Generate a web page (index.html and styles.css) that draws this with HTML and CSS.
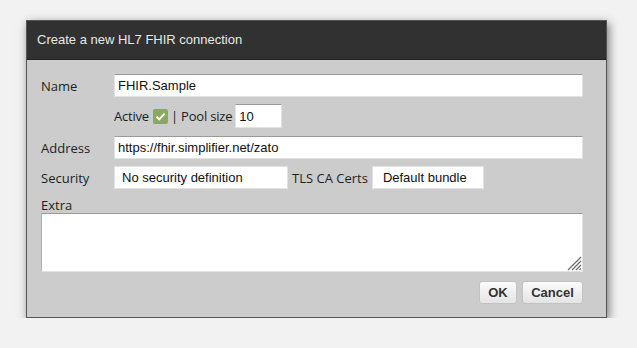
FILE: index.html
```html
<!DOCTYPE html>
<html>
<head>
  <link rel="stylesheet" href="styles.css">
</head>
<body>
  <div class="dialog">
    <div class="dialog-title">Create a new HL7 FHIR connection</div>

    <div class="dialog-body">
      <div class="row">
        <label class="label">Name</label>
        <input type="text" class="field field-wide" value="FHIR.Sample">
      </div>

      <div class="row row-sub">
        <span class="label"></span>
        <span class="inline-text">Active</span>
        <span class="check">
          <svg width="15" height="15" viewBox="0 0 15 15">
            <rect x="0" y="0" width="15" height="15" rx="2" fill="#8aa95e"/>
            <path d="M3.5 7.8 L6.2 10.4 L11.6 4.6" fill="none" stroke="#fff" stroke-width="2"/>
          </svg>
        </span>
        <span class="inline-text">| Pool size</span>
        <input type="text" class="field field-pool" value="10">
      </div>

      <div class="row">
        <label class="label">Address</label>
        <input type="text" class="field field-wide" value="https://fhir.simplifier.net/zato">
      </div>

      <div class="row">
        <label class="label">Security</label>
        <div class="select select-security">No security definition</div>
        <span class="inline-text tls">TLS CA Certs</span>
        <div class="select select-tls">Default bundle</div>
      </div>

      <div class="extra">
        <label class="label">Extra</label>
        <div class="extra-wrap">
          <textarea class="extra-input"></textarea>
          <svg class="grip" width="16" height="16" viewBox="0 0 16 16">
            <path d="M15 2 L2 15 M15 6 L6 15 M15 10 L10 15 M15 13.5 L13.5 15" stroke="#6a6a6a" stroke-width="1.2"/>
          </svg>
        </div>
      </div>

      <div class="button-row">
        <button class="button">OK</button>
        <button class="button">Cancel</button>
      </div>
    </div>
  </div>
</body>
</html>
```

FILE: styles.css
```css
body {
  margin: 0;
  padding: 20px 0 0 26px;
  background-color: #f2f2f2;
  font-family: "Open Sans", "Liberation Sans", Arial, sans-serif;
  font-size: 13px;
  color: #1e1e1e;
}

.dialog {
  width: 579px;
  border: 1px solid #555;
  background-color: #cccccc;
  box-shadow: 2px 3px 9px rgba(0, 0, 0, 0.5);
}

.dialog-title {
  height: 38px;
  line-height: 38px;
  padding-left: 10px;
  background-color: #313131;
  border-bottom: 1px solid #222;
  color: #e8e8e8;
  font-family: "Liberation Sans", Arial, sans-serif;
  font-size: 13px;
}

.dialog-body {
  padding: 14px 23px 13px 14px;
}

.row {
  display: flex;
  align-items: center;
  margin-bottom: 7px;
}

.row-sub {
  margin-bottom: 8px;
}

.label {
  display: block;
  width: 73px;
  flex: none;
}

.inline-text {
  white-space: nowrap;
}

.row-sub .inline-text {
  letter-spacing: -0.2px;
}

.field {
  height: 23px;
  box-sizing: border-box;
  padding: 2px 3px;
  border: 1px solid #e2e2e2;
  border-top-color: #9a9a9a;
  background-color: #fff;
  font-family: "Liberation Sans", Arial, sans-serif;
  font-size: 13px;
  color: #111;
  outline: none;
}

.field-wide {
  flex: 1;
}

.field-pool {
  width: 47px;
  height: 24px;
  margin-left: 3px;
}

.check {
  display: flex;
  margin: 0 3px 0 4px;
}

.select {
  height: 23px;
  box-sizing: border-box;
  padding: 3px 7px 0;
  background-color: #fff;
  border: 1px solid #e2e2e2;
  font-family: "Liberation Sans", Arial, sans-serif;
  font-size: 13px;
  color: #111;
}

.select-security {
  width: 174px;
}

.tls {
  margin: 0 4px;
}

.select-tls {
  width: 112px;
  padding-left: 10px;
}

.extra {
  margin-top: 9px;
}

.extra .label {
  width: auto;
  margin-bottom: 1px;
  line-height: 14px;
}

.extra-wrap {
  position: relative;
}

.extra-input {
  display: block;
  width: 542px;
  height: 59px;
  box-sizing: border-box;
  margin: 0;
  border: 1px solid #e2e2e2;
  border-top-color: #9a9a9a;
  border-left-color: #b0b0b0;
  background-color: #fff;
  resize: none;
  outline: none;
}

.grip {
  position: absolute;
  right: 1px;
  bottom: 1px;
}

.button-row {
  display: flex;
  justify-content: flex-end;
  gap: 5px;
  margin-top: 9px;
  padding-right: 0;
}

.button {
  height: 23px;
  padding: 0 9px;
  border: 1px solid #c2c2c2;
  border-radius: 3px;
  background: linear-gradient(#fbfbfb, #e4e4e4);
  font-family: "Liberation Sans", Arial, sans-serif;
  font-size: 13px;
  font-weight: bold;
  color: #333;
  cursor: pointer;
}

.button:first-child {
  width: 38px;
  padding: 0;
}

.button:last-child {
  width: 61px;
  padding: 0;
}
```
